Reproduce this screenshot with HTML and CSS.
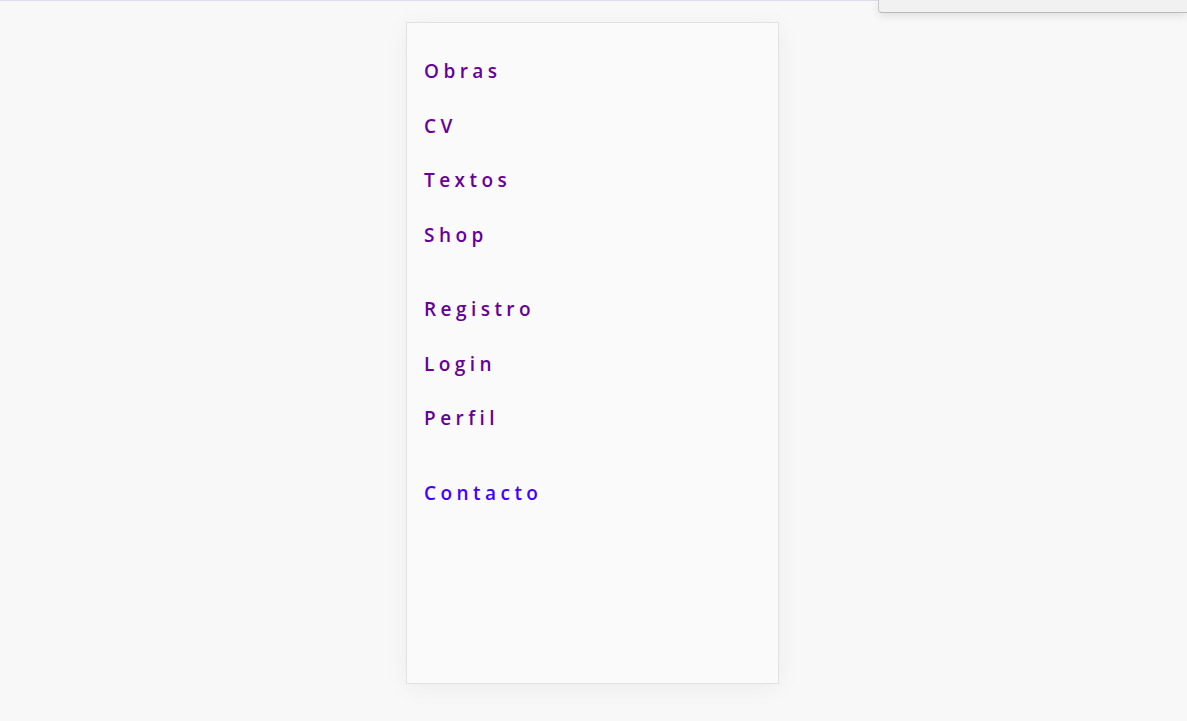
FILE: index.html
```html
<!DOCTYPE html>
<html lang="es">
<head>
<meta charset="utf-8">
<title>Menú</title>
<link rel="stylesheet" href="styles.css">
</head>
<body>
<div class="topline"></div>
<div class="dropdown"></div>
<main class="page">
  <nav class="panel">
    <ul class="group">
      <li><a class="link" href="#">Obras</a></li>
      <li><a class="link" href="#">CV</a></li>
      <li><a class="link" href="#">Textos</a></li>
      <li><a class="link" href="#">Shop</a></li>
    </ul>
    <ul class="group">
      <li><a class="link" href="#">Registro</a></li>
      <li><a class="link" href="#">Login</a></li>
      <li><a class="link" href="#">Perfil</a></li>
    </ul>
    <ul class="group">
      <li><a class="link link-new" href="#">Contacto</a></li>
    </ul>
  </nav>
</main>
</body>
</html>
```

FILE: styles.css
```css
html, body {
  margin: 0;
  padding: 0;
  background: #f7f8f7;
  font-family: "Open Sans", "Noto Sans", sans-serif;
}

body {
  position: relative;
  min-height: 721px;
}

.topline {
  height: 1px;
  background: #dcdde8;
}

.dropdown {
  position: absolute;
  top: 0;
  right: 0;
  width: 308px;
  height: 12px;
  background: #f1f1f1;
  border-left: 1px solid #c9c9c9;
  border-bottom: 1px solid #b9b9b9;
  border-bottom-left-radius: 4px;
  box-shadow: 0 3px 8px rgba(0, 0, 0, 0.10);
}

.page {
  display: flex;
  justify-content: center;
  padding-top: 21px;
}

.panel {
  box-sizing: border-box;
  width: 373px;
  height: 662px;
  margin-right: 2px;
  background: #fafafa;
  border: 1px solid #e1e1e1;
  box-shadow: 0 4px 22px rgba(0, 0, 0, 0.05);
  padding: 21px 16px 0 17px;
}

.group {
  list-style: none;
  margin: 0 0 20px 0;
  padding: 0;
}

.link {
  display: block;
  line-height: 54.5px;
  font-size: 19px;
  font-weight: 600;
  letter-spacing: 4.45px;
  color: #660099;
  text-decoration: none;
}

.link-new {
  color: #4200ff;
}
```
